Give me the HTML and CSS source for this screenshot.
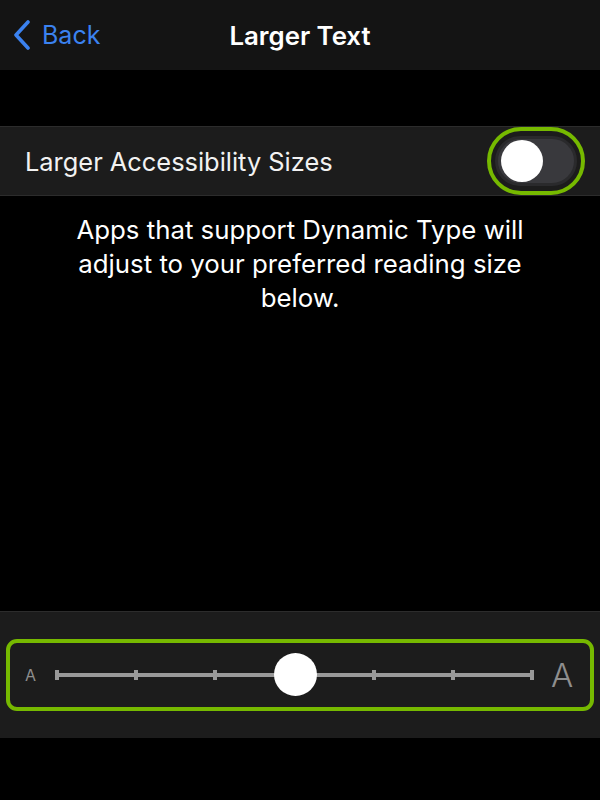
FILE: index.html
```html
<!DOCTYPE html>
<html>
<head>
<meta charset="utf-8">
<link rel="stylesheet" href="styles.css">
</head>
<body>
<div class="screen">
  <header class="nav">
    <div class="back">
      <svg class="chev" width="18" height="30" viewBox="0 0 18 30"><path d="M15 2 L3 15 L15 28" fill="none" stroke="#3b82f0" stroke-width="3.6" stroke-linecap="round" stroke-linejoin="round"/></svg>
      <span class="back-label">Back</span>
    </div>
    <div class="title">Larger Text</div>
  </header>
  <div class="gap"></div>
  <div class="row">
    <span class="row-label">Larger Accessibility Sizes</span>
    <div class="toggle-ring">
      <div class="toggle"><div class="thumb"></div></div>
    </div>
  </div>
  <p class="desc">Apps that support Dynamic Type will adjust to your preferred reading size below.</p>
  <div class="spacer"></div>
  <div class="panel">
    <div class="slider-ring">
      <span class="a-small">A</span>
      <div class="track">
        <div class="line"></div>
        <span class="tick" style="left:0%"></span>
        <span class="tick" style="left:16.667%"></span>
        <span class="tick" style="left:33.333%"></span>
        <span class="tick" style="left:66.667%"></span>
        <span class="tick" style="left:83.333%"></span>
        <span class="tick" style="left:100%"></span>
        <span class="knob"></span>
      </div>
      <span class="a-big">A</span>
    </div>
  </div>
</div>
</body>
</html>
```
FILE: styles.css
```css
html, body { margin: 0; padding: 0; background: #000; }
.screen {
  width: 600px; height: 800px; background: #000;
  font-family: "Inter", "Roboto", "Liberation Sans", sans-serif;
  color: #fff; display: flex; flex-direction: column;
}
.nav {
  height: 70px; background: #141414; position: relative;
  display: flex; align-items: center; justify-content: center;
}
.back {
  position: absolute; left: 13px; top: 0; height: 70px;
  display: flex; align-items: center; gap: 11px;
}
.chev { display: block; margin-top: -1px; }
.back-label { color: #3b82f0; font-size: 25px; }
.title { font-size: 25.8px; font-weight: 600; }
.gap { height: 56px; }
.row {
  height: 68px; background: #1c1c1c;
  border-top: 1px solid #2c2c2c; border-bottom: 1px solid #2c2c2c;
  display: flex; align-items: center; justify-content: space-between;
  padding: 0 15px 0 25px;
}
.row-label { font-size: 25.4px; color: #f2f2f2; }
.toggle-ring {
  width: 90px; height: 60px; border: 4px solid #76b900; border-radius: 34px;
  display: flex; align-items: center; justify-content: center; box-sizing: content-box;
}
.toggle {
  width: 82px; height: 50px; border-radius: 25px; background: #39393d;
  border: 3px solid #2a2a2c; box-sizing: border-box; display: flex; align-items: center;
  padding-left: 3px;
}
.thumb { width: 42px; height: 42px; border-radius: 50%; background: #fff; }
.desc {
  margin: 17px 66px 0; text-align: center; font-size: 25.8px; line-height: 34px; color: #fff;
}
.spacer { flex: 1; }
.panel {
  height: 127px; background: #1c1c1c; border-top: 1px solid #2c2c2c;
  margin-bottom: 62px; padding: 27px 6px 0; box-sizing: border-box;
}
.slider-ring {
  height: 72px; border: 4px solid #76b900; border-radius: 11px; box-sizing: border-box;
  display: flex; align-items: center; padding: 0 14px 0 15px;
}
.a-small { font-size: 16px; color: #8e8e8e; width: 32px; }
.a-big { font-size: 33px; color: #8e8e8e; margin-left: 19px; font-weight: 300; }
.track { position: relative; width: 475px; height: 44px; }
.line { position: absolute; left: 0; right: 0; top: 20px; height: 4px; background: #999; }
.tick { position: absolute; top: 17px; width: 4px; height: 10px; margin-left: -2px; background: #999; }
.knob {
  position: absolute; left: 50%; top: 0; width: 43px; height: 43px; margin-left: -21px;
  border-radius: 50%; background: #fff;
}
```
